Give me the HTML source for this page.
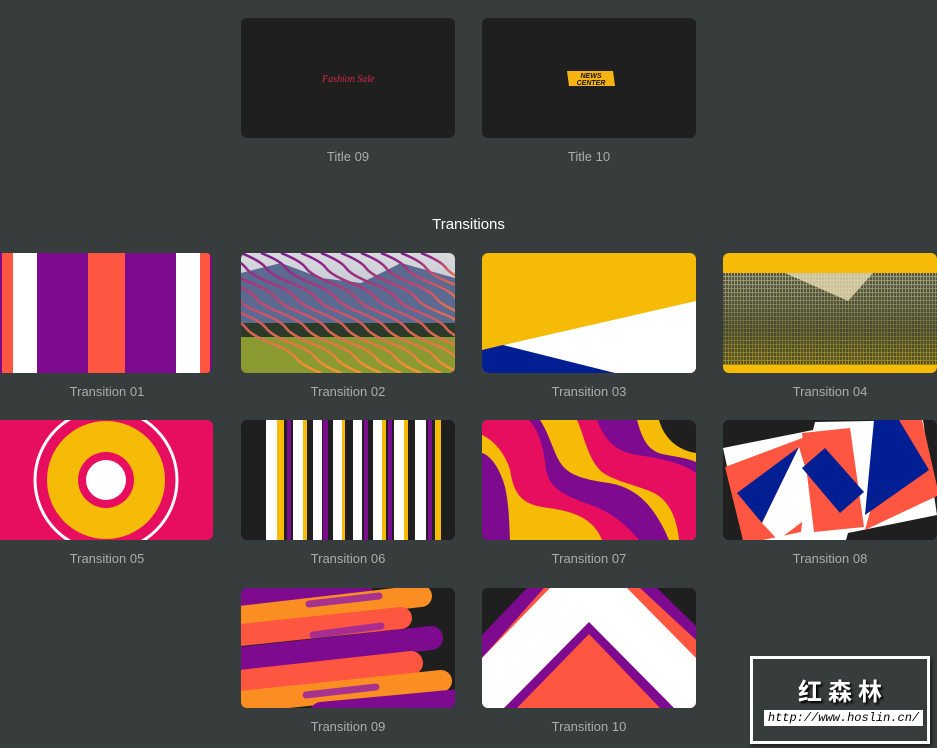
<!DOCTYPE html>
<html><head><meta charset="utf-8"><style>
html,body{margin:0;padding:0;}
body{width:937px;height:748px;background:#373c3c;position:relative;overflow:hidden;font-family:"Liberation Sans",sans-serif;}
.c{position:absolute;width:214px;height:120px;border-radius:6px;overflow:hidden;background:#1f1f1f;}
.c svg{display:block;}
.l{position:absolute;width:214px;text-align:center;color:#a9adad;font-size:13px;}
</style></head><body>

<!-- Titles -->
<div class="c" style="left:241px;top:18px"><svg width="214" height="120">
<text x="81" y="64" fill="#d8284a" font-family="Liberation Serif,serif" font-style="italic" font-size="10">Fashion Sale</text></svg></div>
<div class="c" style="left:482px;top:18px"><svg width="214" height="120">
<polygon points="85,53 131,53 133,68 87,68" fill="#f6b412"/>
<text x="109" y="60" text-anchor="middle" font-size="7" font-weight="bold" font-style="italic" fill="#111">NEWS</text>
<text x="109" y="67" text-anchor="middle" font-size="7" font-weight="bold" font-style="italic" fill="#111">CENTER</text></svg></div>
<div class="l" style="left:241px;top:149px">Title 09</div>
<div class="l" style="left:482px;top:149px">Title 10</div>

<div style="position:absolute;left:0;width:937px;top:216px;text-align:center;color:#fff;font-size:15px">Transitions</div>

<!-- Row 1 -->
<div class="c" style="left:0;top:253px;width:212px;border-radius:0 6px 6px 0"><svg width="214" height="120">
<rect width="214" height="120" fill="#7d0a8f"/>
<rect x="2" width="11" height="120" fill="#fe5640"/>
<rect x="13" width="24" height="120" fill="#fff"/>
<rect x="88" width="37" height="120" fill="#fe5640"/>
<rect x="176" width="24" height="120" fill="#fff"/>
<rect x="200" width="10" height="120" fill="#fe5640"/></svg></div>

<div class="c" style="left:241px;top:253px"><svg width="214" height="120">
<defs><linearGradient id="sky" x1="0" y1="0" x2="0" y2="1"><stop offset="0" stop-color="#d8dadd"/><stop offset="1" stop-color="#9aa6b8"/></linearGradient>
<linearGradient id="ln" x1="0" y1="0" x2="0" y2="1"><stop offset="0" stop-color="#7d1a8f"/><stop offset="0.5" stop-color="#d0506a"/><stop offset="1" stop-color="#f5962a"/></linearGradient></defs>
<rect width="214" height="120" fill="url(#sky)"/>
<polygon points="0,20 40,10 80,25 120,30 160,10 214,25 214,70 0,75" fill="#5a6a90"/>
<rect y="70" width="214" height="15" fill="#2c3a2a"/>
<rect y="84" width="214" height="36" fill="#8a9a30"/>
<g fill="none" stroke="url(#ln)" stroke-width="2.5">
<path d="M-40,0 q20,8 25,15 t25,15 t25,15 t25,15 t25,15 t25,15 t25,15 t25,15"/>
<path d="M-20,0 q20,8 25,15 t25,15 t25,15 t25,15 t25,15 t25,15 t25,15 t25,15"/>
<path d="M0,0 q20,8 25,15 t25,15 t25,15 t25,15 t25,15 t25,15 t25,15 t25,15"/>
<path d="M20,0 q20,8 25,15 t25,15 t25,15 t25,15 t25,15 t25,15 t25,15 t25,15"/>
<path d="M40,0 q20,8 25,15 t25,15 t25,15 t25,15 t25,15 t25,15 t25,15 t25,15"/>
<path d="M60,0 q20,8 25,15 t25,15 t25,15 t25,15 t25,15 t25,15 t25,15 t25,15"/>
<path d="M80,0 q20,8 25,15 t25,15 t25,15 t25,15 t25,15 t25,15 t25,15 t25,15"/>
<path d="M100,0 q20,8 25,15 t25,15 t25,15 t25,15 t25,15 t25,15"/>
<path d="M120,0 q20,8 25,15 t25,15 t25,15 t25,15 t25,15"/>
<path d="M140,0 q20,8 25,15 t25,15 t25,15 t25,15"/>
<path d="M160,0 q20,8 25,15 t25,15 t25,15"/>
<path d="M180,0 q20,8 25,15 t25,15"/>
<path d="M-60,0 q20,8 25,15 t25,15 t25,15 t25,15 t25,15 t25,15 t25,15 t25,15"/>
<path d="M-80,0 q20,8 25,15 t25,15 t25,15 t25,15 t25,15 t25,15 t25,15 t25,15"/>
<path d="M-100,0 q20,8 25,15 t25,15 t25,15 t25,15 t25,15 t25,15 t25,15 t25,15"/>
<path d="M-120,0 q20,8 25,15 t25,15 t25,15 t25,15 t25,15 t25,15 t25,15 t25,15"/>
</g></svg></div>

<div class="c" style="left:482px;top:253px"><svg width="214" height="120">
<rect width="214" height="120" fill="#f6bb06"/>
<polygon points="0,97 214,48 214,120 0,120" fill="#fff"/>
<polygon points="0,97 21,92 133,120 0,120" fill="#021e93"/></svg></div>

<div class="c" style="left:723px;top:253px"><svg width="214" height="120">
<defs><pattern id="dt" width="3" height="4" patternUnits="userSpaceOnUse"><rect width="2" height="3" fill="#3a3a28"/></pattern>
<linearGradient id="d4" x1="0" y1="0" x2="0" y2="1"><stop offset="0" stop-color="#a0a080"/><stop offset="0.6" stop-color="#6a6a3a"/><stop offset="1" stop-color="#9a8a20"/></linearGradient></defs>
<rect width="214" height="120" fill="#f6bb06"/>
<rect y="20" width="214" height="92" fill="url(#d4)"/>
<rect y="20" width="214" height="92" fill="url(#dt)" opacity="0.7"/>
<polygon points="62,20 150,20 125,48" fill="#e8dcb0" opacity="0.8"/></svg></div>

<div class="l" style="left:0;top:384px">Transition 01</div>
<div class="l" style="left:241px;top:384px">Transition 02</div>
<div class="l" style="left:482px;top:384px">Transition 03</div>
<div class="l" style="left:723px;top:384px">Transition 04</div>

<!-- Row 2 -->
<div class="c" style="left:0;top:420px;width:213px;border-radius:0 6px 6px 0"><svg width="214" height="120">
<rect width="214" height="120" fill="#e80e5f"/>
<circle cx="106" cy="60" r="71" fill="none" stroke="#fff" stroke-width="3"/>
<circle cx="106" cy="60" r="59" fill="#f6bb06"/>
<circle cx="106" cy="60" r="28" fill="#e80e5f"/>
<circle cx="106" cy="60" r="20" fill="#fff"/></svg></div>

<div class="c" style="left:241px;top:420px"><svg width="214" height="120">
<rect width="214" height="120" fill="#1f1f1f"/>
<g fill="#fff"><rect x="25" width="11" height="120"/><rect x="52" width="10" height="120"/><rect x="72" width="9" height="120"/><rect x="92" width="9" height="120"/><rect x="112" width="9" height="120"/><rect x="132" width="9" height="120"/><rect x="153" width="10" height="120"/><rect x="174" width="11" height="120"/></g>
<g fill="#f6bb06"><rect x="36" width="7" height="120"/><rect x="62" width="4" height="120"/><rect x="101" width="3" height="120"/><rect x="141" width="4" height="120"/><rect x="163" width="4" height="120"/><rect x="194" width="6" height="120"/></g>
<g fill="#7d0a8f"><rect x="46" width="4" height="120"/><rect x="82" width="5" height="120"/><rect x="123" width="4" height="120"/><rect x="147" width="4" height="120"/><rect x="187" width="4" height="120"/></g></svg></div>

<div class="c" style="left:482px;top:420px"><svg width="214" height="120">
<rect width="214" height="120" fill="#7d0a8f"/>
<path d="M0,33 C8,35 18,48 23,67 C27,85 27,100 28,120 L214,120 L214,0 L0,0Z" fill="#f6bb06"/>
<path d="M0,15 C12,20 24,35 28,50 C32,75 40,85 67,88 C95,92 112,100 120,120 L214,120 L214,0 L0,0Z" fill="#e80e5f"/>
<path d="M47,0 C58,12 62,30 64,50 C68,68 80,74 103,83 C125,90 140,100 157,120 L214,120 L214,0Z" fill="#7d0a8f"/>
<path d="M58,0 C68,15 72,35 80,45 C88,56 105,60 127,63 C150,67 170,80 187,120 L214,120 L214,0Z" fill="#f6bb06"/>
<path d="M95,0 C102,15 106,40 120,52 C130,60 150,64 170,72 C188,80 195,100 197,120 L214,120 L214,0Z" fill="#e80e5f"/>
<path d="M115,0 C122,18 132,30 150,34 C175,38 200,42 214,53 L214,0Z" fill="#7d0a8f"/>
<path d="M155,0 C160,18 165,30 180,34 C195,37 205,38 214,42 L214,0Z" fill="#f6bb06"/>
<path d="M177,0 C182,18 195,30 214,33 L214,0Z" fill="#1f1f1f"/></svg></div>

<div class="c" style="left:723px;top:420px"><svg width="214" height="120">
<rect width="214" height="120" fill="#1f1f1f"/>
<polygon points="0,28 90,10 92,2 200,0 214,95 125,113 123,120 20,120" fill="#fff"/>
<polygon points="2,47 90,14 78,112 40,120 20,120" fill="#fe5640"/>
<polygon points="14,73 76,27 39,103" fill="#021e93"/>
<polygon points="76,27 95,90 55,120 39,103" fill="#fff"/>
<polygon points="79,13 127,8 141,107 91,112" fill="#fe5640"/>
<polygon points="79,48 102,28 141,72 117,93" fill="#021e93"/>
<polygon points="172,0 199,0 216,75 142,110" fill="#fe5640"/>
<polygon points="151,0 176,0 206,50 142,95" fill="#021e93"/></svg></div>

<div class="l" style="left:0;top:551px">Transition 05</div>
<div class="l" style="left:241px;top:551px">Transition 06</div>
<div class="l" style="left:482px;top:551px">Transition 07</div>
<div class="l" style="left:723px;top:551px">Transition 08</div>

<!-- Row 3 -->
<div class="c" style="left:241px;top:588px"><svg width="214" height="120">
<rect width="214" height="120" fill="#1f1f1f"/>
<g stroke-linecap="round">
<line x1="-10" y1="10" x2="120" y2="0" stroke="#7d0a8f" stroke-width="22"/>
<line x1="-10" y1="30" x2="180" y2="8" stroke="#fb8e22" stroke-width="22"/>
<line x1="-10" y1="48" x2="160" y2="30" stroke="#fe5640" stroke-width="22"/>
<line x1="-10" y1="72" x2="190" y2="50" stroke="#7d0a8f" stroke-width="24"/>
<line x1="-10" y1="95" x2="170" y2="75" stroke="#fe5640" stroke-width="24"/>
<line x1="-10" y1="115" x2="200" y2="93" stroke="#fb8e22" stroke-width="22"/>
<line x1="80" y1="125" x2="240" y2="110" stroke="#7d0a8f" stroke-width="22"/>
<line x1="68" y1="16" x2="138" y2="8" stroke="#a02a9a" stroke-width="7" opacity="0.9"/>
<line x1="72" y1="47" x2="140" y2="38" stroke="#a02a9a" stroke-width="7" opacity="0.9"/>
<line x1="65" y1="107" x2="135" y2="99" stroke="#a02a9a" stroke-width="7" opacity="0.9"/>
</g></svg></div>

<div class="c" style="left:482px;top:588px"><svg width="214" height="120">
<rect width="214" height="120" fill="#1f1f1f"/>
<polygon points="0,47 45,0 175,0 214,38 214,120 0,120" fill="#7d0a8f"/>
<polygon points="0,70 62,0 158,0 214,52 214,120 0,120" fill="#fe5640"/>
<polygon points="0,70 68,0 145,0 214,70 214,120 0,120" fill="#fff"/>
<polygon points="22,120 107,34 192,120" fill="#7d0a8f"/>
<polygon points="35,120 107,46 178,120" fill="#fe5640"/></svg></div>

<div class="l" style="left:241px;top:719px">Transition 09</div>
<div class="l" style="left:482px;top:719px">Transition 10</div>

<!-- Watermark -->
<div style="position:absolute;left:750px;top:656px;width:174px;height:82px;border:3px solid #fff;background:#373c3c;box-shadow:2px 2px 3px rgba(0,0,0,0.5)"></div>
<div style="position:absolute;left:753px;top:672px;width:174px;text-align:center;color:#fff;font-size:24px;font-weight:bold;letter-spacing:6px;text-indent:6px;font-family:'Liberation Sans','Noto Sans CJK SC',sans-serif;text-shadow:2px 2px 2px #000">红森林</div>
<div style="position:absolute;left:764px;top:710px;width:159px;height:16px;background:#fff;color:#000;font-family:'Liberation Mono',monospace;font-style:italic;font-size:12px;line-height:16px;text-align:center;overflow:hidden;white-space:nowrap">http://www.hoslin.cn/</div>

</body></html>
